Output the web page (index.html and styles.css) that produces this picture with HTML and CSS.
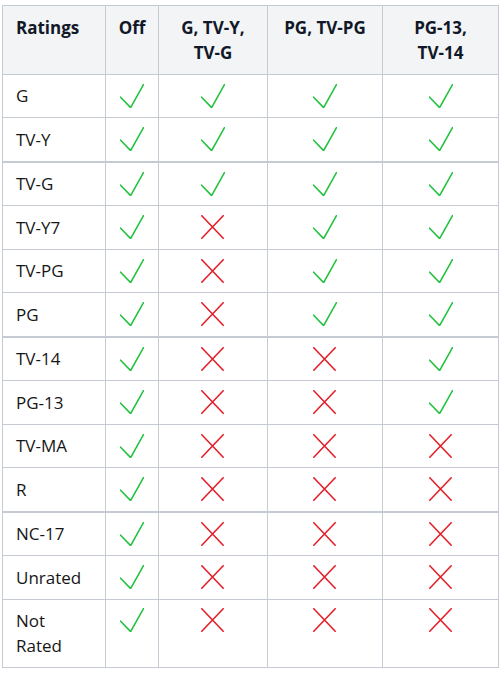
FILE: index.html
```html
<!DOCTYPE html>
<html>
<head>
<meta charset="utf-8">
<link rel="stylesheet" href="styles.css">
</head>
<body>
<svg width="0" height="0" class="defs">
  <symbol id="ok" viewBox="0 0 24 24"><path d="M0.6 13.2 L10.6 23.6 L23.5 0.6" fill="none" stroke="#22c23f" stroke-width="1.6" stroke-linecap="round" stroke-linejoin="round"/></symbol>
  <symbol id="no" viewBox="0 0 24 24"><path d="M0.8 0.8 L22.2 23.2 M22.2 0.8 L0.8 23.2" fill="none" stroke="#e3202a" stroke-width="1.6" stroke-linecap="round"/></symbol>
</svg>
<div class="page">
<table class="ratings">
  <colgroup>
    <col class="c1"><col class="c2"><col class="c3"><col class="c4"><col class="c5">
  </colgroup>
  <thead>
    <tr>
      <th class="first">Ratings</th>
      <th>Off</th>
      <th>G, TV-Y,<br>TV-G</th>
      <th>PG, TV-PG</th>
      <th>PG-13,<br>TV-14</th>
    </tr>
  </thead>
  <tbody>
    <tr><td class="first">G</td><td><svg class="ic"><use href="#ok"/></svg></td><td><svg class="ic"><use href="#ok"/></svg></td><td><svg class="ic"><use href="#ok"/></svg></td><td><svg class="ic"><use href="#ok"/></svg></td></tr>
    <tr><td class="first">TV-Y</td><td><svg class="ic"><use href="#ok"/></svg></td><td><svg class="ic"><use href="#ok"/></svg></td><td><svg class="ic"><use href="#ok"/></svg></td><td><svg class="ic"><use href="#ok"/></svg></td></tr>
    <tr class="group"><td class="first">TV-G</td><td><svg class="ic"><use href="#ok"/></svg></td><td><svg class="ic"><use href="#ok"/></svg></td><td><svg class="ic"><use href="#ok"/></svg></td><td><svg class="ic"><use href="#ok"/></svg></td></tr>
    <tr><td class="first">TV-Y7</td><td><svg class="ic"><use href="#ok"/></svg></td><td><svg class="ic"><use href="#no"/></svg></td><td><svg class="ic"><use href="#ok"/></svg></td><td><svg class="ic"><use href="#ok"/></svg></td></tr>
    <tr><td class="first">TV-PG</td><td><svg class="ic"><use href="#ok"/></svg></td><td><svg class="ic"><use href="#no"/></svg></td><td><svg class="ic"><use href="#ok"/></svg></td><td><svg class="ic"><use href="#ok"/></svg></td></tr>
    <tr><td class="first">PG</td><td><svg class="ic"><use href="#ok"/></svg></td><td><svg class="ic"><use href="#no"/></svg></td><td><svg class="ic"><use href="#ok"/></svg></td><td><svg class="ic"><use href="#ok"/></svg></td></tr>
    <tr class="group"><td class="first">TV-14</td><td><svg class="ic"><use href="#ok"/></svg></td><td><svg class="ic"><use href="#no"/></svg></td><td><svg class="ic"><use href="#no"/></svg></td><td><svg class="ic"><use href="#ok"/></svg></td></tr>
    <tr><td class="first">PG-13</td><td><svg class="ic"><use href="#ok"/></svg></td><td><svg class="ic"><use href="#no"/></svg></td><td><svg class="ic"><use href="#no"/></svg></td><td><svg class="ic"><use href="#ok"/></svg></td></tr>
    <tr><td class="first">TV-MA</td><td><svg class="ic"><use href="#ok"/></svg></td><td><svg class="ic"><use href="#no"/></svg></td><td><svg class="ic"><use href="#no"/></svg></td><td><svg class="ic"><use href="#no"/></svg></td></tr>
    <tr><td class="first">R</td><td><svg class="ic"><use href="#ok"/></svg></td><td><svg class="ic"><use href="#no"/></svg></td><td><svg class="ic"><use href="#no"/></svg></td><td><svg class="ic"><use href="#no"/></svg></td></tr>
    <tr class="group"><td class="first">NC-17</td><td><svg class="ic"><use href="#ok"/></svg></td><td><svg class="ic"><use href="#no"/></svg></td><td><svg class="ic"><use href="#no"/></svg></td><td><svg class="ic"><use href="#no"/></svg></td></tr>
    <tr><td class="first">Unrated</td><td><svg class="ic"><use href="#ok"/></svg></td><td><svg class="ic"><use href="#no"/></svg></td><td><svg class="ic"><use href="#no"/></svg></td><td><svg class="ic"><use href="#no"/></svg></td></tr>
    <tr class="top"><td class="first">Not<br>Rated</td><td><svg class="ic"><use href="#ok"/></svg></td><td><svg class="ic"><use href="#no"/></svg></td><td><svg class="ic"><use href="#no"/></svg></td><td><svg class="ic"><use href="#no"/></svg></td></tr>
  </tbody>
</table>
</div>
</body>
</html>
```
FILE: styles.css
```css
html, body {
  margin: 0;
  padding: 0;
  background: #ffffff;
}
.defs {
  position: absolute;
  width: 0;
  height: 0;
  overflow: hidden;
}
.page {
  padding: 5px 0 0 2px;
  font-family: "Open Sans", "Noto Sans", sans-serif;
  font-size: 17px;
  color: #161616;
}
.ratings {
  border-collapse: collapse;
  width: 496px;
  table-layout: fixed;
}
.c1 { width: 103px; }
.c2 { width: 53px; }
.c3 { width: 109px; }
.c4 { width: 115px; }
.c5 { width: 116px; }
.ratings th,
.ratings td {
  border: 1px solid #c6cad2;
  padding: 8.75px 4px;
  line-height: 25px;
  text-align: center;
  vertical-align: top;
}
.ratings th {
  background: #f3f4f6;
  font-weight: 700;
  color: #111827;
}
.ratings td {
  vertical-align: middle;
}
.ratings .first {
  text-align: left;
  padding-left: 13px;
}
.ratings tr.group td {
  border-top: 2px solid #c6cad2;
}
.ratings tr.top td {
  vertical-align: top;
}
.ic {
  display: block;
  width: 24px;
  height: 24px;
  margin: 0 auto;
}
```
